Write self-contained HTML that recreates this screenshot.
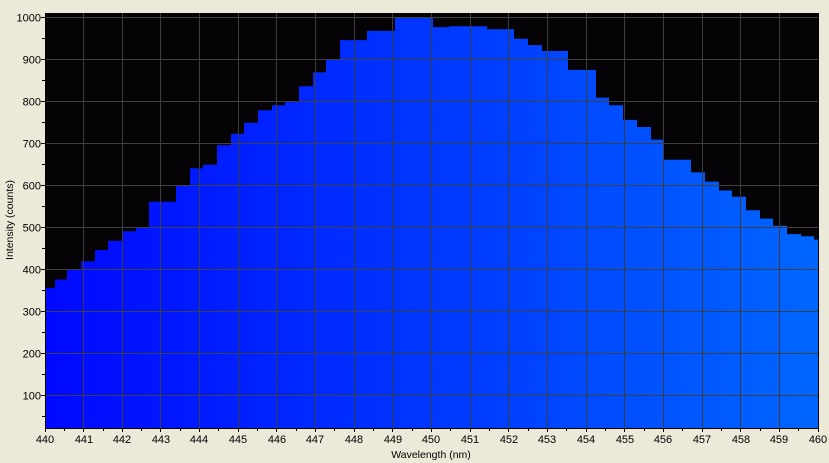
<!DOCTYPE html>
<html><head><meta charset="utf-8"><style>
html,body{margin:0;padding:0;background:#ECE9D8;width:829px;height:463px;overflow:hidden;position:relative;}
#plot{position:absolute;left:45px;top:13px;width:773px;height:415px;background:#050305;overflow:hidden;}
#fill{position:absolute;left:0;top:0;width:773px;height:415px;background:linear-gradient(to right,#0008FF,#0066FF);
clip-path:polygon(0px 415px,0px 274.9px,10px 274.9px,10px 266.5px,22px 266.5px,22px 256px,36px 256px,36px 248.4px,50px 248.4px,50px 237.1px,63px 237.1px,63px 227.9px,77px 227.9px,77px 218.2px,91px 218.2px,91px 214px,104px 214px,104px 188.8px,131px 188.8px,131px 172px,145px 172px,145px 155.2px,158px 155.2px,158px 151.8px,172px 151.8px,172px 132.1px,186px 132.1px,186px 120.8px,199px 120.8px,199px 109.8px,213px 109.8px,213px 97.2px,227px 97.2px,227px 92.2px,240px 92.2px,240px 88px,254px 88px,254px 73.3px,268px 73.3px,268px 59.4px,281px 59.4px,281px 46px,295px 46px,295px 27.1px,322px 27.1px,322px 17.9px,350px 17.9px,350px 4px,388px 4px,388px 14.1px,404px 14.1px,404px 13.2px,442px 13.2px,442px 16.2px,469px 16.2px,469px 25.8px,483px 25.8px,483px 32.1px,497px 32.1px,497px 38px,523px 38px,523px 56.9px,551px 56.9px,551px 84.6px,564px 84.6px,564px 92.2px,578px 92.2px,578px 106.9px,592px 106.9px,592px 114px,606px 114px,606px 126.6px,619px 126.6px,619px 146.8px,646px 146.8px,646px 159.4px,660px 159.4px,660px 168.6px,674px 168.6px,674px 177.5px,687px 177.5px,687px 183.8px,701px 183.8px,701px 197.2px,715px 197.2px,715px 205.6px,728px 205.6px,728px 212.7px,742px 212.7px,742px 221.1px,756px 221.1px,756px 223.2px,769px 223.2px,769px 226.6px,773px 226.6px,773px 415px);}
#hg{position:absolute;left:0;top:4px;width:773px;height:380px;background:repeating-linear-gradient(to bottom,#404040 0px,#404040 1px,transparent 1px,transparent 42px);}
.h{position:absolute;left:0;width:773px;height:1px;background:#404040;}
.v{position:absolute;top:0;height:415px;width:1px;background:#3c3c3c;}
svg{position:absolute;left:0;top:0;display:block;font-family:"Liberation Sans",sans-serif;font-size:11px;}
</style></head><body>
<div id="plot">
<div id="fill"></div>
<div id="hg"></div>
<div class="h" style="top:4px"></div><div class="h" style="top:46px"></div><div class="h" style="top:88px"></div><div class="h" style="top:130px"></div><div class="h" style="top:172px"></div><div class="h" style="top:214px"></div><div class="h" style="top:256px"></div><div class="h" style="top:298px"></div><div class="h" style="top:340px"></div><div class="h" style="top:382px"></div>
<div class="v" style="left:38px"></div><div class="v" style="left:77px"></div><div class="v" style="left:115px"></div><div class="v" style="left:154px"></div><div class="v" style="left:193px"></div><div class="v" style="left:231px"></div><div class="v" style="left:270px"></div><div class="v" style="left:309px"></div><div class="v" style="left:347px"></div><div class="v" style="left:386px"></div><div class="v" style="left:425px"></div><div class="v" style="left:463px"></div><div class="v" style="left:502px"></div><div class="v" style="left:541px"></div><div class="v" style="left:579px"></div><div class="v" style="left:618px"></div><div class="v" style="left:657px"></div><div class="v" style="left:695px"></div><div class="v" style="left:734px"></div>
</div>
<svg width="829" height="463" viewBox="0 0 829 463" xmlns="http://www.w3.org/2000/svg">
<g stroke="#000" stroke-width="1" fill="none">
<path d="M45.5 13V428.5H818.5V13"/>
<path d="M41 17.5H45M41 59.5H45M41 101.5H45M41 143.5H45M41 185.5H45M41 227.5H45M41 269.5H45M41 311.5H45M41 353.5H45M41 395.5H45M42 38.5H45M42 80.5H45M42 122.5H45M42 164.5H45M42 206.5H45M42 248.5H45M42 290.5H45M42 332.5H45M42 374.5H45M42 416.5H45"/>
<path d="M45.5 428V432M64.5 428V431M83.5 428V432M103.5 428V431M122.5 428V432M141.5 428V431M160.5 428V432M180.5 428V431M199.5 428V432M218.5 428V431M238.5 428V432M257.5 428V431M276.5 428V432M296.5 428V431M315.5 428V432M334.5 428V431M354.5 428V432M373.5 428V431M392.5 428V432M412.5 428V431M431.5 428V432M450.5 428V431M470.5 428V432M489.5 428V431M508.5 428V432M528.5 428V431M547.5 428V432M566.5 428V431M586.5 428V432M605.5 428V431M624.5 428V432M644.5 428V431M663.5 428V432M682.5 428V431M702.5 428V432M721.5 428V431M740.5 428V432M760.5 428V431M779.5 428V432M798.5 428V431M818.5 428V432"/>
</g>
<g text-anchor="end" fill="#000">
<text x="41" y="21.5">1000</text><text x="41" y="63.5">900</text><text x="41" y="105.5">800</text><text x="41" y="147.5">700</text><text x="41" y="189.5">600</text><text x="41" y="231.5">500</text><text x="41" y="273.5">400</text><text x="41" y="315.5">300</text><text x="41" y="357.5">200</text><text x="41" y="399.5">100</text>
</g>
<g text-anchor="middle" fill="#000">
<text x="45" y="443">440</text><text x="84" y="443">441</text><text x="122" y="443">442</text><text x="161" y="443">443</text><text x="199" y="443">444</text><text x="238" y="443">445</text><text x="277" y="443">446</text><text x="315" y="443">447</text><text x="354" y="443">448</text><text x="393" y="443">449</text><text x="431" y="443">450</text><text x="470" y="443">451</text><text x="509" y="443">452</text><text x="547" y="443">453</text><text x="586" y="443">454</text><text x="625" y="443">455</text><text x="663" y="443">456</text><text x="702" y="443">457</text><text x="741" y="443">458</text><text x="779" y="443">459</text><text x="818" y="443">460</text>
<text x="431" y="458" font-size="10.5">Wavelength (nm)</text>
<text transform="translate(13 220) rotate(-90)" font-size="10.5">Intensity (counts)</text>
</g>
</svg>
</body></html>
